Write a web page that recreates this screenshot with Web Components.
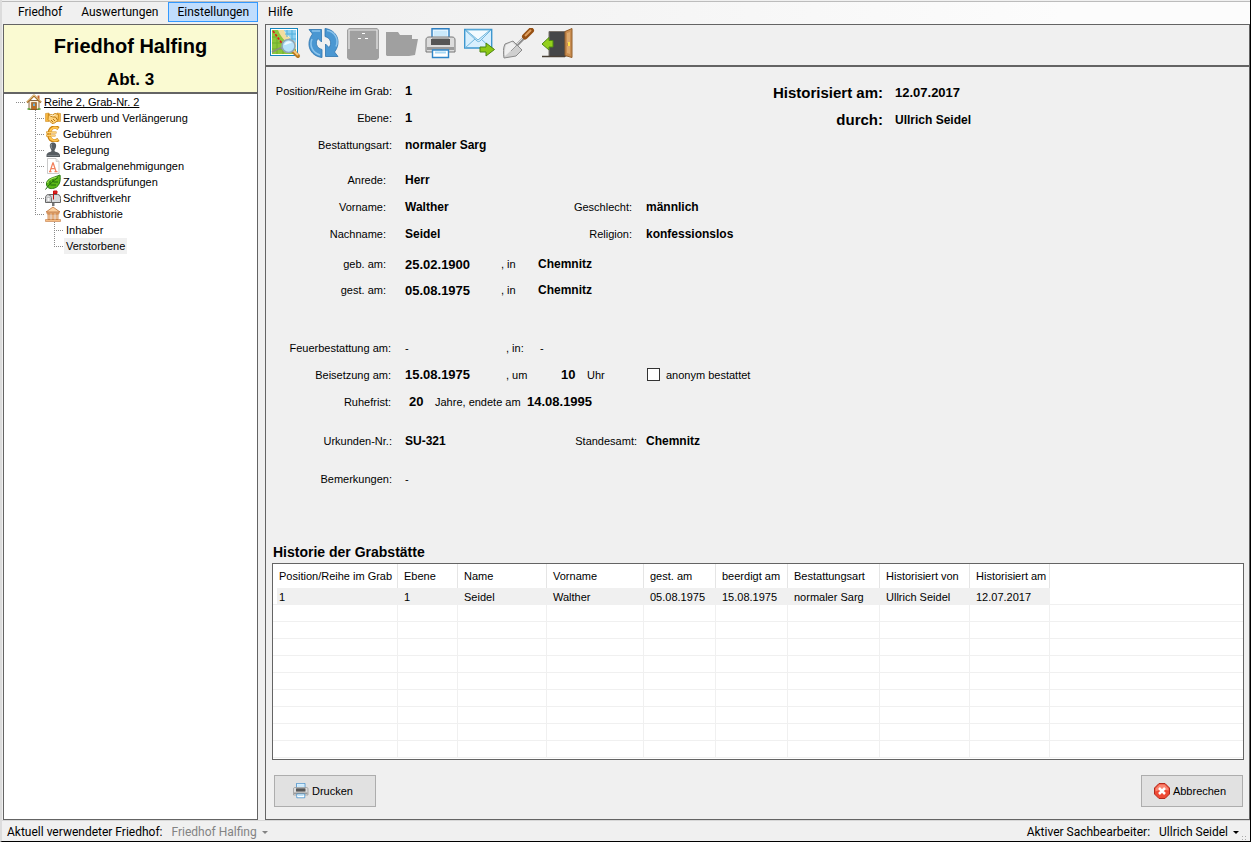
<!DOCTYPE html>
<html lang="de">
<head>
<meta charset="utf-8">
<meta name="viewport" content="width=device-width, initial-scale=1">
<title>Friedhof Halfing – Grabhistorie</title>
<style>
  html, body { height: 100%; }
  body {
    margin: 0;
    background: #f0f0f0;
    color: #000;
    font-family: "Liberation Sans", Arial, sans-serif;
    font-size: 11px;
  }
</style>
</head>
<body>
<cemetery-window>
  <menu-bar slot="menu" items="Friedhof,Auswertungen,Einstellungen,Hilfe" current="Einstellungen"></menu-bar>
  <site-header slot="side">
    <span slot="name">Friedhof Halfing</span>
    <span slot="section">Abt. 3</span>
  </site-header>
  <grave-tree slot="side"></grave-tree>
  <tool-bar slot="main"></tool-bar>
  <grave-record slot="main"></grave-record>
  <history-table slot="main">Historie der Grabstätte</history-table>
  <action-bar slot="main">
    <action-button icon="printer">Drucken</action-button>
    <action-button icon="cancel">Abbrechen</action-button>
  </action-bar>
  <status-bar slot="status"></status-bar>
</cemetery-window>

<script>
const ICONS = {
  map: `<rect x="1.5" y=".5" width="27" height="27" fill="#fff" stroke="#1687bd"/>
    <path d="M3 2h7l17 19v5H3z" fill="#8cc63c"/><path d="M14 2h13v14z" fill="#8ed0f0"/>
    <path d="M9 2h6c1 5 6 7 12 13v6C20 16 12 11 9 2z" fill="#f2dda0"/>
    <path d="M18 2v7M23 2v11M16 6h11M20 11h7" stroke="#4fb0de" fill="none"/>
    <path d="M3 9h5M3 15h12M3 21h11M8 10v16M14 15v11" stroke="#6fae2c" fill="none"/>
    <path d="M4 3l11 15" stroke="#e01b1b" stroke-width="1.6" stroke-dasharray="2.5 1.5"/>
    <path d="M3 24l8-4 5 1" stroke="#8d8d80" stroke-width="1.5" fill="none"/>
    <path d="M24 23l5 5" stroke="#b9791f" stroke-width="4" stroke-linecap="round"/>
    <path d="M25 23l3.500 3.500" stroke="#fbc878" stroke-width="2" stroke-linecap="round"/>
    <circle cx="19.500" cy="18" r="6.500" fill="#b5e2fa" stroke="#8fa6b4" stroke-width="1.600"/>
    <path d="M15 17c1-4 6-5 8-2-3 0-5 2-8 2z" fill="#eefaff"/>`,
  refresh: `<g fill="#4a97d2" stroke="#2d74ad" stroke-width=".8" stroke-linejoin="round">
    <path d="M1 1.500h12.500v12.500l-3.500-3.500C7 14 8 20 14 21.500v8C2 28-3 16 4.500 6z"/>
    <path d="M30 28.500H17.500V16l3.500 3.500C24 16 23 10 17 8.500V.5C29 2 34 14 26.500 24z"/></g>
    <path d="M4 11c-3 7 1 14 8 16M19 2.500c8 1 12 9 9 16M4 3h8" stroke="#8cc4ec" stroke-width="1.500" fill="none"/>`,
  drawer: `<path d="M2 0h28l2 2v28l-2 2H2l-2-2V2z" fill="#a0a0a0"/>
    <path d="M2 21V2h28v19" fill="none" stroke="#e8e8e8" stroke-width="1.200"/>
    <path d="M15 5h3v1h-3zM11 10h3v1h-3zM18 10h3v1h-3z" fill="#fff"/>`,
  folder: `<path d="M0 4h12l2 3h12v4h6l-3 16-6 1H1l-1-1z" fill="#a0a0a0"/>`,
  printer: `<path d="M7 11V.7h17V11" fill="#e3f4ff" stroke="#2f7fc1" stroke-width="1.400"/>
    <path d="M1 12c0-2 1-3 3-3h23c2 0 3 1 3 3v12H1z" fill="#dcdcdc" stroke="#777"/>
    <path d="M7 9h17v8H7z" fill="#a9a9a9"/><path d="M6 11h19v6H6z" fill="#555"/><path d="M2 19h27v3H2z" fill="#9a9a9a"/>
    <path d="M7.500 22h16v7.500h-16z" fill="#fff" stroke="#2f86c9" stroke-width="1.400"/>
    <path d="M10 24.500h11" stroke="#a8d8f4" stroke-width="2"/><path d="M9 3h13v5H9z" fill="#cbe9fb"/>`,
  mail: `<path d="M.7 1.500h27v18.500h-27z" fill="#d8effd" stroke="#3d97cf" stroke-width="1.400"/>
    <path d="M1 2l12 11c1 .8 2 .8 3 0L27 2M1 20l10-9M27 20l-10-9" fill="none" stroke="#6fb5dc"/>
    <path d="M2 2l12 10L26 2z" fill="#f4fbff" stroke="#6fb5dc"/>
    <path d="M16 19h6v-4l8.500 6.500-8.500 6.500v-4h-6z" fill="#8dc814" stroke="#4b8410" stroke-linejoin="round"/>`,
  trowel: `<path d="M14 17l9-9" stroke="#8e8e8e" stroke-width="3"/><path d="M14 16l8-8" stroke="#d8d8d8"/>
    <path d="M22 8.500l6-6" stroke="#965013" stroke-width="6" stroke-linecap="round"/>
    <path d="M22 8l6-6" stroke="#e0a060" stroke-width="2"/>
    <path d="M2 16l8-3 9 9-6 6-12 2c-1-5-1-10 1-14z" fill="#cfcfcf" stroke="#8a8a8a"/>
    <path d="M3 17l6-3 4 4L2 28c-.5-4 0-8 1-11z" fill="#efefef"/><path d="M8 23l8-8" stroke="#999"/>`,
  exit: `<path d="M7 3.500h17v25H7z" fill="#454648" stroke="#77706a"/>
    <path d="M0 28.500h23" stroke="#4a4036" stroke-width="1.500"/>
    <path d="M23 3.500l7-3v29l-7-2z" fill="#c98d50" stroke="#935e2a"/>
    <path d="M25 5l3-1v11l-3 0zM25 18h3v8l-3-1z" fill="#dba86e"/><path d="M26 14h2v4h-2z" fill="#ffe04c"/>
    <path d="M11 12.500H7V9.500L0 16l7 6v-3h4z" fill="#94d01c" stroke="#4e8a12" stroke-linejoin="round"/>`,
  house: `<path d="M6 13h20v18H6z" fill="#fff3dc" stroke="#8a6a46" stroke-width="2"/>
    <path d="M23 3h4v9h-4z" fill="#c7632e"/>
    <path d="M2 17L16 3l14 14" fill="none" stroke="#a9722d" stroke-width="4" stroke-linejoin="round"/>
    <path d="M2 15L16 2l14 13" fill="none" stroke="#ffe3a0" stroke-width="1.500"/>
    <path d="M11 17h10v14H11z" fill="#b96f25" stroke="#704012"/><path d="M14 19h4v5h-4z" fill="#6bb3dd"/>
    <path d="M3 30h6M23 30h6" stroke="#54a331" stroke-width="3"/>`,
  hands: `<path d="M1 7l7-1v17H1zM24 6l7 1v16h-7z" fill="#f7b740" stroke="#c88015"/>
    <path d="M7 8l8 2 5-3 7 2-1 12-7 5-5 1L6 19z" fill="#ffd27b" stroke="#c98719" stroke-width="2"/>
    <path d="M9 11l7 3 5 0 4 6M12 20l4 4M16 18l4 4" fill="none" stroke="#b47411" stroke-width="2"/>
    <path d="M10 10l6 2 5-3" fill="none" stroke="#fff1c8" stroke-width="2"/>`,
  euro: `<path d="M27 5C18-2 9 4 8 16s10 18 19 11" fill="none" stroke="#c98110" stroke-width="7"/>
    <path d="M26 5C18 0 10 5 9 16s9 16 17 11" fill="none" stroke="#ffc653" stroke-width="4"/>
    <path d="M2 13h21M2 19h19" stroke="#d68e18" stroke-width="4"/><path d="M3 13h19M3 19h17" stroke="#ffd173" stroke-width="2"/>`,
  person: `<path d="M16 1c6 0 7 5 6 9s-3 5-3 8c0 2 11 2 11 9v3H3v-3c0-7 10-7 10-9 0-3-2-4-3-8s0-9 6-9z" fill="#555b60"/>
    <path d="M13 4c-2 3 0 7 1 9" stroke="#9ca2a6" stroke-width="2" fill="none"/><path d="M5 27h23" stroke="#7d8387" stroke-width="2"/>`,
  document: `<path d="M5 1h17l6 6v24H5z" fill="#fff" stroke="#b9b9b9" stroke-width="1.500"/>
    <path d="M22 1v6h6" fill="#e7e7e7" stroke="#b9b9b9"/>
    <path d="M16 9l-6 18M16 9l6 18M12 21h8M8 27h5M19 27h6" stroke="#f2825f" stroke-width="2.500" fill="none"/>`,
  leaf: `<path d="M30 2c2 13-2 26-15 27-7 1-12-3-12-9C3 9 15 8 30 2z" fill="#5cb818" stroke="#2b7d10" stroke-width="2"/>
    <path d="M1 31C8 21 16 14 26 7M10 21v-7M16 16l0-6M11 22h11M17 16h9" stroke="#216c0c" stroke-width="2" fill="none"/>
    <path d="M5 18c2-7 9-9 18-12" stroke="#b1e76c" stroke-width="2" fill="none"/>`,
  mailbox: `<path d="M14 24h5v8h-5z" fill="#777"/><path d="M7 9h18c5 0 6 4 6 8v8H1v-8c0-5 2-8 6-8z" fill="#d7d9db" stroke="#666" stroke-width="2"/>
    <path d="M7 10c5 0 6 4 6 8v7" fill="none" stroke="#777" stroke-width="2"/><path d="M4 15h6v8H4z" fill="#f8f8f8" stroke="#999"/>
    <path d="M17 19V2h7v5h-7" fill="#e72020" stroke="#c51212" stroke-width="2"/>`,
  museum: `<path d="M2 12L16 2l14 10z" fill="#fbd0a0" stroke="#b9692d" stroke-width="1.500"/>
    <path d="M4 13h24v3H4zM1 27h30v4H1z" fill="#f5bd85" stroke="#b9692d"/>
    <path d="M6 16h4v11H6zM14 16h4v11h-4zM22 16h4v11h-4z" fill="#ffdcb5" stroke="#bd7136" stroke-width="1.500"/>`,
  cancel: `<path d="M10 1h12l9 9v12l-9 9H10l-9-9V10z" fill="#ee4a35" stroke="#b4281b" stroke-width="2"/>
    <path d="M11 3h10l8 8v4c-8-3-18-2-26 2v-6z" fill="#f98672"/>
    <path d="M10 10l12 12M22 10L10 22" stroke="#fff" stroke-width="5"/>`
};

class Base extends HTMLElement {
  constructor() { super(); this.attachShadow({ mode: "open" }); }
  connectedCallback() { this.shadowRoot.innerHTML = this.render(); }
}

customElements.define("ui-icon", class extends Base {
  render() {
    return `<style>:host{display:block;width:var(--icon,16px);height:var(--icon,16px);flex:none}svg{display:block}</style>
      <svg width="100%" height="100%" viewBox="0 0 32 32" aria-hidden="true">${ICONS[this.getAttribute("name")]}</svg>`;
  }
});

customElements.define("cemetery-window", class extends Base {
  render() {
    return `<style>
      :host{display:grid;grid-template-rows:23px 1fr 21px;min-height:100vh;box-sizing:border-box;padding-top:1px;
        border-left:2px solid #dcdcdc;border-right:1px solid #000;border-bottom:1px solid #000;background:#f0f0f0}
      .body{display:grid;grid-template-columns:255px 1fr;gap:7px;padding-left:1px}
      .panel{display:flex;flex-direction:column;border:1px solid #646464;min-width:0}
      .side{background:#fff}
    </style>
    <slot name="menu"></slot>
    <div class="body">
      <nav class="panel side"><slot name="side"></slot></nav>
      <main class="panel"><slot name="main"></slot></main>
    </div>
    <slot name="status"></slot>`;
  }
});

customElements.define("menu-bar", class extends Base {
  render() {
    const current = this.getAttribute("current");
    const items = this.getAttribute("items").split(",").map(t =>
      `<button type="button" role="menuitem"${t === current ? ' class="on"' : ""}>${t}</button>`).join("");
    return `<style>
      :host{display:block;border-top:1px solid #bcbcbc;background:linear-gradient(90deg,#f0f0f0 25%,#fcfcfc 85%)}
      div{display:flex;padding:0 0 2px 7px;gap:1px}
      button{height:20px;box-sizing:border-box;padding:0 8px;border:1px solid transparent;background:none;
        font:12px/18px Roboto,sans-serif;color:#000}
      .on{background:#c0ddfd;border-color:#3399ff}
    </style><div role="menubar">${items}</div>`;
  }
});

customElements.define("site-header", class extends Base {
  render() {
    return `<style>
      :host{display:block;background:#fafad2;border-bottom:2px solid #646464;text-align:center}
      h1,h2{margin:0;font-weight:bold}
      h1{font-size:20px;line-height:42px}
      h2{font-size:17px;line-height:25px}
    </style><h1><slot name="name"></slot></h1><h2><slot name="section"></slot></h2>`;
  }
});

customElements.define("grave-tree", class extends Base {
  render() {
    const leaf = (icon, text, sub = "") =>
      `<li><div class="row"><i></i><ui-icon name="${icon}"></ui-icon><a href="#">${text}</a></div>${sub}</li>`;
    return `<style>
      :host{display:block;flex:1}
      ul{list-style:none;margin:0;padding:0}
      .root{padding-left:12px}
      .root>li>ul{margin-left:19px}
      ul ul ul{margin-left:19px}
      .row{display:flex;height:16px}
      i{width:10px;background:repeating-linear-gradient(90deg,#8a8a8a 0 1px,transparent 1px 2px) 0 8px/9px 1px no-repeat}
      ul ul li{background:repeating-linear-gradient(#8a8a8a 0 1px,transparent 1px 2px) 0 0/1px 100% no-repeat}
      ul ul li:last-child{background-size:1px 8px}
      a{padding:0 2px;color:#000;text-decoration:none;line-height:16px;white-space:nowrap}
      .root>li>.row a{text-decoration:underline}
      .root ul .row a{text-decoration:none}
      a[aria-current]{background:#f0f0f0}
    </style>
    <ul class="root"><li>
      <div class="row"><i></i><ui-icon name="house"></ui-icon><a href="#">Reihe 2, Grab-Nr. 2</a></div>
      <ul>
        ${leaf("hands", "Erwerb und Verlängerung")}
        ${leaf("euro", "Gebühren")}
        ${leaf("person", "Belegung")}
        ${leaf("document", "Grabmalgenehmigungen")}
        ${leaf("leaf", "Zustandsprüfungen")}
        ${leaf("mailbox", "Schriftverkehr")}
        ${leaf("museum", "Grabhistorie", `<ul>
          <li><div class="row"><i></i><a href="#">Inhaber</a></div></li>
          <li><div class="row"><i></i><a href="#" aria-current="page">Verstorbene</a></div></li></ul>`)}
      </ul>
    </li></ul>`;
  }
});

customElements.define("tool-bar", class extends Base {
  render() {
    const tools = [["map", "Karte"], ["refresh", "Aktualisieren"], ["drawer", "Archiv", 1], ["folder", "Ordner", 1],
      ["printer", "Drucken"], ["mail", "Senden"], ["trowel", "Grabpflege"], ["exit", "Schließen"]];
    return `<style>
      :host{display:block;border-bottom:2px solid #646464;background:#f0f0f0}
      div{display:flex;gap:7px;padding:3px 3px 5px}
      button{padding:0;border:0;background:none;--icon:32px}
    </style><div role="toolbar">${tools.map(([n, l, off]) =>
      `<button type="button" aria-label="${l}"${off ? " disabled" : ""}><ui-icon name="${n}"></ui-icon></button>`).join("")}</div>`;
  }
});

customElements.define("grave-record", class extends Base {
  render() {
    return `<style>
      :host{display:flex;padding-top:10px}
      .fields{width:490px;flex:none}
      .group{display:grid;grid-auto-rows:27px;align-items:center;white-space:nowrap}
      .label{text-align:right}
      b{font-size:12px}
      b.num{font-size:13px}
      .grave{grid-template-columns:126px 13px 1fr}
      .person{grid-template-columns:120px 19px 160px 67px 14px 1fr;margin-top:8px}
      .dates{grid-template-columns:120px 19px 96px 37px 1fr;grid-auto-rows:26px;margin-top:4px}
      .burial{grid-template-columns:125px 14px 101px 34px 1fr;margin-top:31px}
      .time{display:grid;grid-template-columns:47px 60px 1fr;align-items:center}
      .time .num{padding-left:21px}
      .rest{grid-template-columns:125px 18px 26px 92px 1fr}
      .deed{grid-template-columns:126px 13px 160px 72px 9px 1fr;margin-top:12px}
      .note{grid-template-columns:126px 13px 1fr;margin-top:11px}
      label{display:flex;align-items:center;gap:6px}
      input{appearance:none;width:13px;height:13px;box-sizing:border-box;margin:0;border:1px solid #333;background:#fff}
      input:checked{background:#333;box-shadow:inset 0 0 0 2px #fff}
      aside{padding-top:2px}
      aside .group{grid-template-columns:127px 1fr;column-gap:12px}
      aside .label{font-size:15px;font-weight:bold}
    </style>
    <div class="fields">
      <div class="group grave">
        <span class="label">Position/Reihe im Grab:</span><i></i><b class="num">1</b>
        <span class="label">Ebene:</span><i></i><b class="num">1</b>
        <span class="label">Bestattungsart:</span><i></i><b>normaler Sarg</b>
      </div>
      <div class="group person">
        <span class="label">Anrede:</span><i></i><b>Herr</b><i></i><i></i><i></i>
        <span class="label">Vorname:</span><i></i><b>Walther</b><span class="label">Geschlecht:</span><i></i><b>männlich</b>
        <span class="label">Nachname:</span><i></i><b>Seidel</b><span class="label">Religion:</span><i></i><b>konfessionslos</b>
      </div>
      <div class="group dates">
        <span class="label">geb. am:</span><i></i><b class="num">25.02.1900</b><span>, in</span><b>Chemnitz</b>
        <span class="label">gest. am:</span><i></i><b class="num">05.08.1975</b><span>, in</span><b>Chemnitz</b>
      </div>
      <div class="group burial">
        <span class="label">Feuerbestattung am:</span><i></i><span>-</span><span>, in:</span><span>-</span>
        <span class="label">Beisetzung am:</span><i></i><b class="num">15.08.1975</b><span>, um</span>
        <div class="time"><b class="num">10</b><span>Uhr</span><label><input type="checkbox">anonym bestattet</label></div>
      </div>
      <div class="group rest">
        <span class="label">Ruhefrist:</span><i></i><b class="num">20</b><span>Jahre, endete am</span><b class="num">14.08.1995</b>
      </div>
      <div class="group deed">
        <span class="label">Urkunden-Nr.:</span><i></i><b>SU-321</b><span class="label">Standesamt:</span><i></i><b>Chemnitz</b>
      </div>
      <div class="group note">
        <span class="label">Bemerkungen:</span><i></i><span>-</span>
      </div>
    </div>
    <aside><div class="group">
      <span class="label">Historisiert am:</span><b class="num">12.07.2017</b>
      <span class="label">durch:</span><b>Ullrich Seidel</b>
    </div></aside>`;
  }
});

customElements.define("history-table", class extends Base {
  render() {
    const widths = [125, 60, 89, 97, 72, 72, 92, 90, 80];
    const heads = ["Position/Reihe im Grab", "Ebene", "Name", "Vorname", "gest. am", "beerdigt am", "Bestattungsart", "Historisiert von", "Historisiert am"];
    const row = ["1", "1", "Seidel", "Walther", "05.08.1975", "15.08.1975", "normaler Sarg", "Ullrich Seidel", "12.07.2017"];
    const blank = `<tr>${"<td></td>".repeat(10)}</tr>`;
    return `<style>
      :host{display:block;margin:auto 5px 0 6px}
      h2{margin:0 0 0 1px;font-size:14px;line-height:22px}
      .box{border:1px solid #646464;background:#fff;padding-bottom:1px}
      table{width:100%;table-layout:fixed;border-collapse:separate;border-spacing:0}
      th,td{box-sizing:border-box;padding:0 0 0 6px;text-align:left;font-weight:normal;white-space:nowrap;
        border-right:1px solid #f0f0f0}
      th{height:24px;border-color:#e5e5e5}
      td{height:17px;padding-top:2px;line-height:14px;border-bottom:1px solid #f0f0f0}
      th:last-child,td:last-child{border-right:0}
      .sel td:not(:last-child){background:#f0f0f0}
      .sel td:first-child{background:linear-gradient(90deg,#fff 4px,#f0f0f0 4px)}
    </style>
    <h2><slot></slot></h2>
    <div class="box"><table>
      <colgroup>${widths.map(w => `<col style="width:${w}px">`).join("")}<col></colgroup>
      <thead><tr>${heads.map(h => `<th scope="col">${h}</th>`).join("")}<th></th></tr></thead>
      <tbody><tr class="sel">${row.map(c => `<td>${c}</td>`).join("")}<td></td></tr>${blank.repeat(9)}</tbody>
    </table></div>`;
  }
});

customElements.define("action-bar", class extends Base {
  render() {
    return `<style>:host{display:flex;justify-content:space-between;padding:15px 6px 12px 8px}</style><slot></slot>`;
  }
});

customElements.define("action-button", class extends Base {
  render() {
    return `<style>
      :host{display:block}
      button{display:flex;align-items:center;justify-content:center;gap:3px;box-sizing:border-box;width:102px;height:32px;
        padding:0 4px 0 0;border:1px solid #adadad;background:#e1e1e1;color:#000;font:inherit}
    </style><button type="button"><ui-icon name="${this.getAttribute("icon")}"></ui-icon><span><slot></slot></span></button>`;
  }
});

customElements.define("status-bar", class extends Base {
  render() {
    return `<style>
      :host{display:flex;justify-content:space-between;align-items:center;box-sizing:border-box;border-top:1px solid #d7d7d7;
        padding:2px 3px 0 5px;font:12px/18px Roboto,sans-serif}
      .pick{display:flex;align-items:center;gap:9px}
      .wrap{display:flex;align-items:center;gap:5px}
      select{appearance:none;field-sizing:content;border:0;margin:0;padding:0;background:none;font:inherit;color:#000;opacity:1}
      select:disabled{color:#838383}
      .wrap::after{content:"";border:3px solid transparent;border-top-color:currentColor;border-bottom:0}
      .off{color:#838383}
      .end{padding-right:2px}
      .grip{align-self:end;width:6px;height:6px;
        background:radial-gradient(#aaa 1px,transparent 1px) 0 0/3px 3px}
      .right{display:flex}
    </style>
    <div class="pick"><label for="site">Aktuell verwendeter Friedhof:</label>
      <span class="wrap off"><select id="site" disabled><option>Friedhof Halfing</option></select></span></div>
    <div class="right"><div class="pick end"><label for="user">Aktiver Sachbearbeiter:</label>
      <span class="wrap"><select id="user"><option>Ullrich Seidel</option></select></span></div><span class="grip"></span></div>`;
  }
});
</script>
</body>
</html>
